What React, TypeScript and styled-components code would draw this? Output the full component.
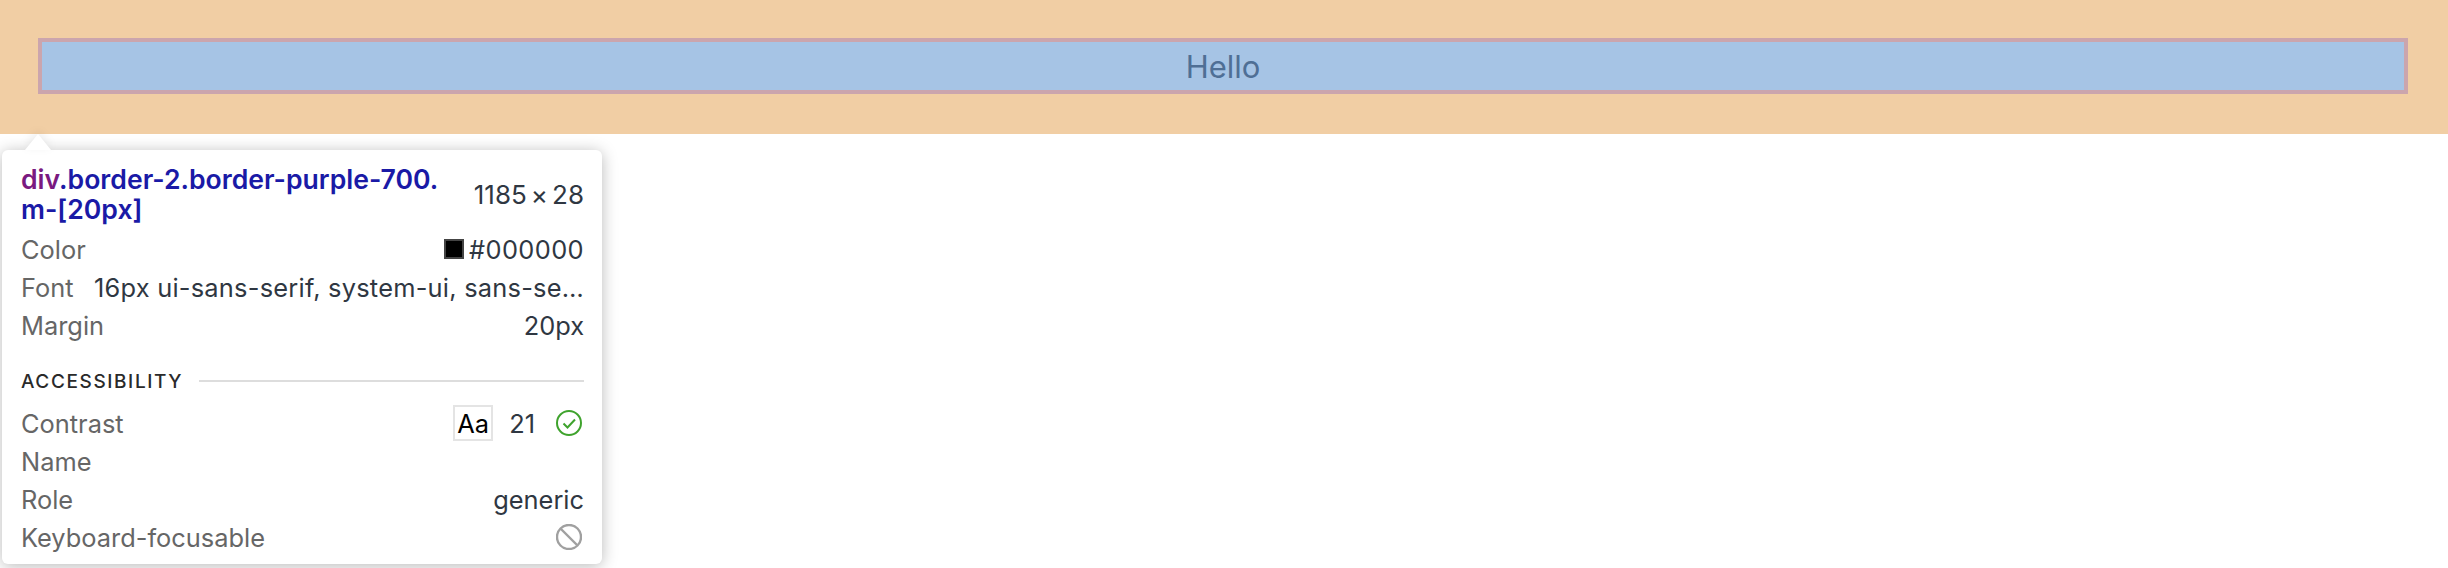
import React from 'react';
import styled, { createGlobalStyle } from 'styled-components';

const GlobalStyle = createGlobalStyle`
  html, body {
    margin: 0;
    padding: 0;
    background: #fff;
    font-family: Inter, "Liberation Sans", sans-serif;
  }
`;

const Page = styled.div`
  position: relative;
  width: 2448px;
  height: 568px;
  overflow: hidden;
  background: #fff;
`;

const MarginArea = styled.div`
  height: 134px;
  box-sizing: border-box;
  padding: 38px 40px 40px 38px;
  background: #f1cea4;
`;

const BorderBox = styled.div`
  height: 56px;
  box-sizing: border-box;
  border: 4px solid #cba5ad;
  background: #a6c4e5;
  display: flex;
  align-items: center;
  justify-content: center;
  color: #4f6f95;
  font-family: Inter, sans-serif;
  font-size: 31px;
`;

const Tooltip = styled.div`
  position: absolute;
  left: 2px;
  top: 150px;
  width: 600px;
  height: 414px;
  box-sizing: border-box;
  padding: 14px 18px 0 19px;
  background: #fff;
  border-radius: 6px;
  box-shadow: 0 2px 16px rgba(0, 0, 0, 0.28);
  font-size: 25.4px;
  color: #2f3742;
`;

const Arrow = styled.div`
  position: absolute;
  left: 23px;
  top: -16px;
  width: 0;
  height: 0;
  border-left: 13px solid transparent;
  border-right: 13px solid transparent;
  border-bottom: 16px solid #fff;
  filter: drop-shadow(0 -3px 4px rgba(0, 0, 0, 0.08));
`;

const Header = styled.div`
  display: flex;
  justify-content: space-between;
  align-items: center;
  margin-bottom: 6px;
`;

const Selector = styled.div`
  font-weight: 600;
  font-size: 26.6px;
  line-height: 30px;
  color: #1a1aa6;
  white-space: nowrap;
`;

const Tag = styled.span`
  color: #7a1a80;
`;

const Size = styled.div`
  font-size: 26px;
  white-space: nowrap;
`;

const Times = styled.span`
  margin: 0 4px;
`;

const Row = styled.div`
  display: flex;
  justify-content: space-between;
  align-items: center;
  height: 38px;
  white-space: nowrap;
`;

const Label = styled.span`
  color: #666;
`;

const Value = styled.span<{ $spacing?: number }>`
  display: flex;
  align-items: center;
  letter-spacing: ${({ $spacing }) => $spacing ?? 0}px;
`;

const Swatch = styled.span`
  width: 20px;
  height: 20px;
  box-sizing: border-box;
  background: #000;
  border: 2px solid #444;
  margin-right: 5px;
`;

const SectionTitle = styled.div`
  display: flex;
  align-items: center;
  gap: 16px;
  height: 36px;
  margin-top: 19px;
  margin-bottom: 5px;
  font-size: 19px;
  font-weight: 500;
  letter-spacing: 1.6px;
  color: #2a2a2a;
  &::after {
    content: '';
    flex: 1;
    height: 2px;
    background: #ddd;
  }
`;

const ContrastBox = styled.span`
  display: flex;
  align-items: center;
  justify-content: center;
  width: 40px;
  height: 36px;
  box-sizing: border-box;
  border: 2px solid #e4e4e4;
  color: #000;
  margin-right: 16px;
`;

const ContrastNumber = styled.span`
  margin-right: 21px;
`;

const Icon = styled.svg`
  display: block;
  margin-right: 2px;
`;

const App: React.FC = () => {
  return (
    <Page>
      <GlobalStyle />
      <MarginArea>
        <BorderBox>Hello</BorderBox>
      </MarginArea>
      <Tooltip>
        <Arrow />
        <Header>
          <Selector>
            <Tag>div</Tag>.border-2.border-purple-700.
            <br />
            m-[20px]
          </Selector>
          <Size>
            1185<Times>×</Times>28
          </Size>
        </Header>
        <Row>
          <Label>Color</Label>
          <Value $spacing={0.4}>
            <Swatch />
            #000000
          </Value>
        </Row>
        <Row>
          <Label>Font</Label>
          <Value $spacing={0.24}>16px ui-sans-serif, system-ui, sans-se…</Value>
        </Row>
        <Row>
          <Label>Margin</Label>
          <Value>20px</Value>
        </Row>
        <SectionTitle>ACCESSIBILITY</SectionTitle>
        <Row>
          <Label>Contrast</Label>
          <Value>
            <ContrastBox>Aa</ContrastBox>
            <ContrastNumber>21</ContrastNumber>
            <Icon width="26" height="26" viewBox="0 0 26 26" fill="none" stroke="#3fa32d" strokeWidth="2">
              <circle cx="13" cy="13" r="12" />
              <path d="M7.5 13.5l4 4 7.5-8" />
            </Icon>
          </Value>
        </Row>
        <Row>
          <Label>Name</Label>
        </Row>
        <Row>
          <Label>Role</Label>
          <Value>generic</Value>
        </Row>
        <Row>
          <Label>Keyboard-focusable</Label>
          <Value>
            <Icon width="26" height="26" viewBox="0 0 26 26" fill="none" stroke="#a0a0a0" strokeWidth="2.4">
              <circle cx="13" cy="13" r="12" />
              <path d="M5 5l16 16" />
            </Icon>
          </Value>
        </Row>
      </Tooltip>
    </Page>
  );
};

export default App;
